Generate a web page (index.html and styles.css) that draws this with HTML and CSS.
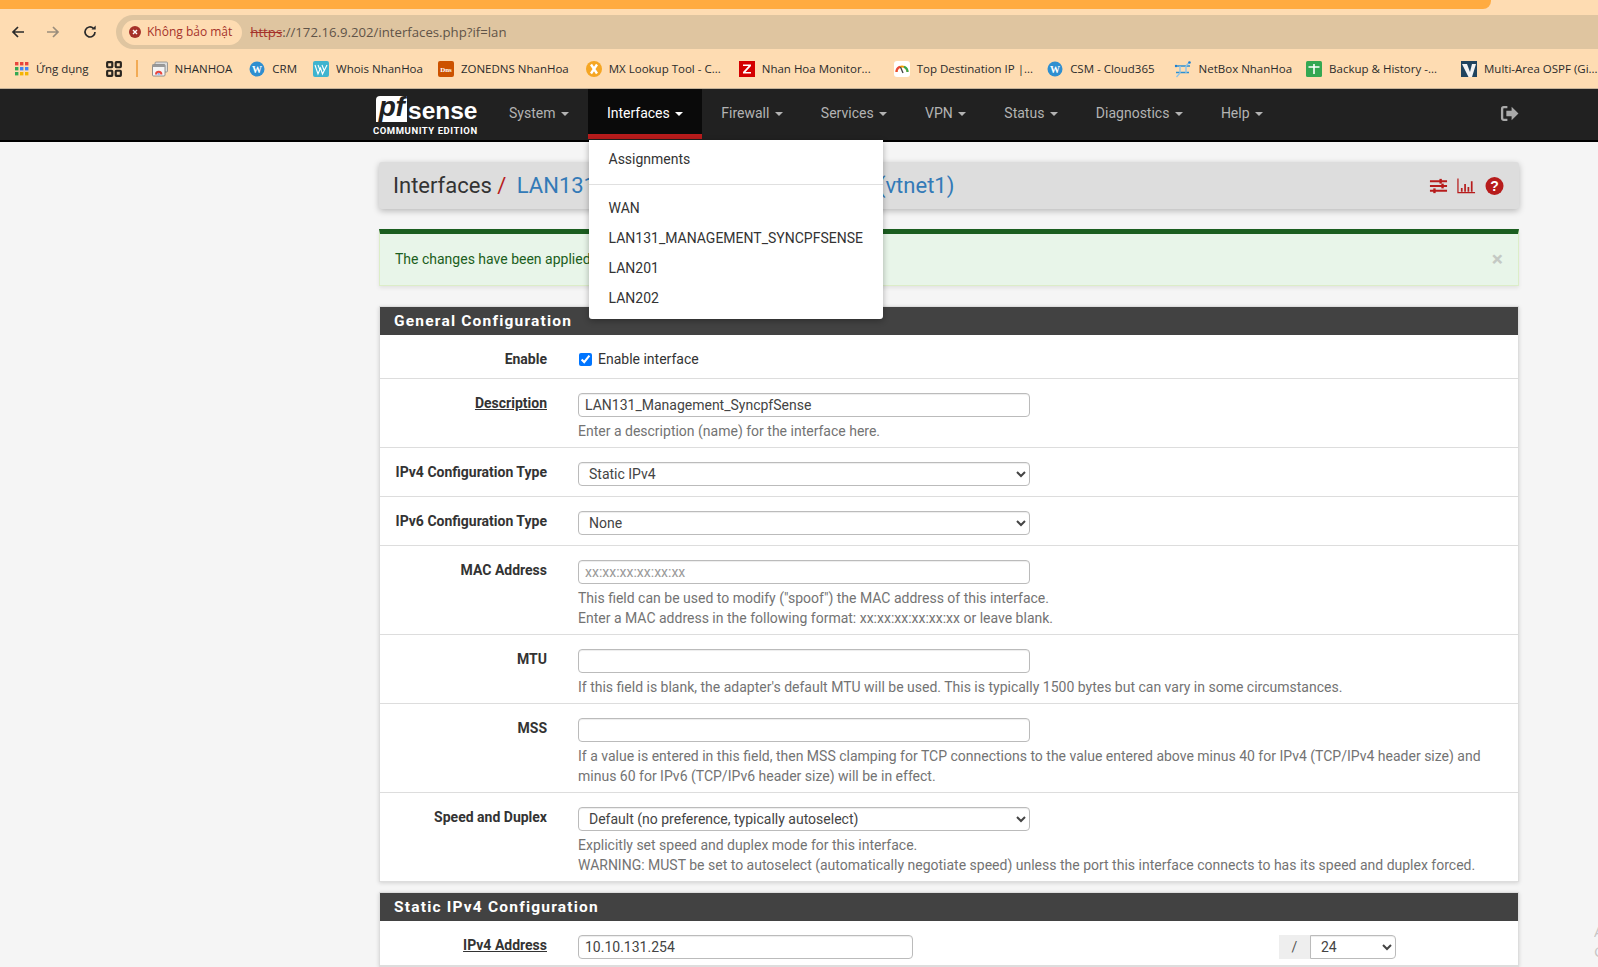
FILE: index.html

```html
<!DOCTYPE html>
<html lang="en">
<head>
  <meta charset="UTF-8">
  <title>pfSense - Interfaces: LAN131</title>
  <link rel="stylesheet" href="styles.css">
</head>
<body>

  <div class="tabstrip"><div class="tab-progress"></div></div>

  <div class="toolbar">
    <svg class="tool-icon" viewBox="0 0 16 16"><path d="M14 8H3M8 3L3 8l5 5" fill="none" stroke="#2b2b2b" stroke-width="1.7"/></svg>
    <svg class="tool-icon" viewBox="0 0 16 16"><path d="M2 8h11M8 3l5 5-5 5" fill="none" stroke="#9a8d7c" stroke-width="1.7"/></svg>
    <svg class="tool-icon tool-reload" viewBox="0 0 16 16"><path d="M13 8a5 5 0 1 1-1.6-3.7" fill="none" stroke="#2b2b2b" stroke-width="1.7"/><path d="M9.500 5.600h4.200V1.400z" fill="#2b2b2b"/></svg>
    <div class="omnibox">
      <div class="security">
        <svg class="sec-icon" viewBox="0 0 12 12"><circle cx="6" cy="6" r="6" fill="#a5322a"/><path d="M4 4l4 4M8 4l-4 4" stroke="#fff" stroke-width="1.4"/></svg>
        <span>Không bảo mật</span>
      </div>
      <div class="url"><s class="scheme">https</s>://172.16.9.202/interfaces.php?if=lan</div>
    </div>
  </div>

  <div class="bookmarks">
    <div class="bm bm-apps">
      <svg class="bm-icon" viewBox="0 0 14 14">
        <rect x="0" y="0" width="3.400" height="3.400" fill="#e8453c"/><rect x="5" y="0" width="3.400" height="3.400" fill="#e8453c"/><rect x="10" y="0" width="3.400" height="3.400" fill="#e8453c"/>
        <rect x="0" y="5" width="3.400" height="3.400" fill="#34a853"/><rect x="5" y="5" width="3.400" height="3.400" fill="#4285f4"/><rect x="10" y="5" width="3.400" height="3.400" fill="#4285f4"/>
        <rect x="0" y="10" width="3.400" height="3.400" fill="#34a853"/><rect x="5" y="10" width="3.400" height="3.400" fill="#f4b400"/><rect x="10" y="10" width="3.400" height="3.400" fill="#f4b400"/>
      </svg>
      <span>Ứng dụng</span>
    </div>
    <svg class="bm-icon bm-grid" viewBox="0 0 14 14"><g fill="none" stroke="#2b2620" stroke-width="1.900"><rect x="1" y="1" width="4.500" height="4.500" rx="0.600"/><rect x="8.500" y="1" width="4.500" height="4.500" rx="0.600"/><rect x="1" y="8.500" width="4.500" height="4.500" rx="0.600"/><rect x="8.500" y="8.500" width="4.500" height="4.500" rx="0.600"/></g></svg>
    <div class="bm-sep"></div>
    <div class="bm bm-1">
      <svg class="bm-icon" viewBox="0 0 16 16"><rect x="3" y="1" width="12.500" height="10" rx="1" fill="#ddd" stroke="#888" stroke-width="0.800"/><rect x="0.500" y="3.500" width="12.500" height="11.500" rx="1" fill="#f4f4f4" stroke="#777" stroke-width="0.800"/><rect x="0.500" y="3.500" width="12.500" height="2.500" fill="#9a9a9a"/><path d="M3 13.500a3.700 3.700 0 0 1 7.400 0h-2a1.700 1.700 0 0 0-3.400 0z" fill="#e8453c"/><path d="M5.500 13.500a1.200 1.200 0 0 1 2.400 0z" fill="#4285f4"/></svg>
      <span>NHANHOA</span>
    </div>
    <div class="bm bm-2">
      <svg class="bm-icon" viewBox="0 0 16 16"><circle cx="8" cy="8" r="7.500" fill="#2f8fd0"/><text x="8" y="11.500" class="icon-text" font-size="10" fill="#fff">W</text></svg>
      <span>CRM</span>
    </div>
    <div class="bm bm-3">
      <svg class="bm-icon" viewBox="0 0 16 16"><rect width="16" height="16" rx="2" fill="#3fb4cf"/><path d="M2 4l3 9 2.500-6 2 6L14 4M5 4l2 5M9 4l2 5" fill="none" stroke="#fff" stroke-width="1.100"/></svg>
      <span>Whois NhanHoa</span>
    </div>
    <div class="bm bm-4">
      <svg class="bm-icon" viewBox="0 0 16 16"><rect width="16" height="16" rx="2" fill="#cc5200"/><text x="8" y="11" class="icon-text" font-size="7" fill="#fff">Dns</text></svg>
      <span>ZONEDNS NhanHoa</span>
    </div>
    <div class="bm bm-5">
      <svg class="bm-icon" viewBox="0 0 16 16"><circle cx="8" cy="8" r="8" fill="#f5a623"/><path d="M5 3.500l6 9M11 3.500l-6 9" stroke="#fff" stroke-width="2.400"/></svg>
      <span>MX Lookup Tool - C...</span>
    </div>
    <div class="bm bm-6">
      <svg class="bm-icon" viewBox="0 0 16 16"><rect width="16" height="16" fill="#d40000"/><path d="M4 3.500h8v1.600L6.500 11H12v1.500H4v-1.600L9.500 5H4z" fill="#fff"/></svg>
      <span>Nhan Hoa Monitor...</span>
    </div>
    <div class="bm bm-7">
      <svg class="bm-icon" viewBox="0 0 16 16"><rect width="16" height="16" rx="3" fill="#fff"/><path d="M2.500 11a5.500 5.500 0 0 1 11 0" fill="none" stroke="#f29900" stroke-width="2"/><path d="M2.500 11A5.500 5.500 0 0 1 6 5.800" fill="none" stroke="#e8453c" stroke-width="2"/><path d="M10 5.800A5.500 5.500 0 0 1 13.500 11" fill="none" stroke="#34a853" stroke-width="2"/><path d="M6.500 6l2.500 6" stroke="#444" stroke-width="1.300"/></svg>
      <span>Top Destination IP |...</span>
    </div>
    <div class="bm bm-8">
      <svg class="bm-icon" viewBox="0 0 16 16"><circle cx="8" cy="8" r="7.500" fill="#2f8fd0"/><text x="8" y="11.500" class="icon-text" font-size="10" fill="#fff">W</text></svg>
      <span>CSM - Cloud365</span>
    </div>
    <div class="bm bm-9">
      <svg class="bm-icon bm-wide" viewBox="0 0 18 18"><path d="M1 6h15M2 12.500h13" fill="none" stroke="#2f8fd0" stroke-width="1.400"/><path d="M6 6v7M12 6v7M12 6l3.500-4M6 13l-3.500 4" fill="none" stroke="#8cc4ea" stroke-width="1.400"/><circle cx="15.500" cy="2.500" r="1.300" fill="#1f7fd0"/><circle cx="2" cy="6" r="1.200" fill="#1f7fd0"/></svg>
      <span>NetBox NhanHoa</span>
    </div>
    <div class="bm bm-10">
      <svg class="bm-icon" viewBox="0 0 16 16"><rect width="16" height="16" rx="1.500" fill="#34a853"/><path d="M2.500 6h11M8 3v10" stroke="#fff" stroke-width="1.600"/></svg>
      <span>Backup &amp; History -...</span>
    </div>
    <div class="bm bm-11">
      <svg class="bm-icon" viewBox="0 0 16 16"><rect width="16" height="16" fill="#20445f"/><path d="M1 3h5l3 8 2-8h4l-4 13H7.500z" fill="#f4f4f4"/></svg>
      <span>Multi-Area OSPF (Gi...</span>
    </div>
  </div>

  <nav class="navbar">
    <div class="brand">
      <div class="brand-top"><span class="brand-pf">pf</span><span class="brand-sense">sense</span></div>
      <div class="brand-sub">COMMUNITY EDITION</div>
    </div>
    <ul class="nav-list">
      <li>System <i class="caret"></i></li>
      <li class="active">Interfaces <i class="caret"></i></li>
      <li>Firewall <i class="caret"></i></li>
      <li>Services <i class="caret"></i></li>
      <li>VPN <i class="caret"></i></li>
      <li>Status <i class="caret"></i></li>
      <li>Diagnostics <i class="caret"></i></li>
      <li>Help <i class="caret"></i></li>
    </ul>
    <svg class="logout" viewBox="0 0 18 16"><path d="M7 2H3.500A1.500 1.500 0 0 0 2 3.500v9A1.500 1.500 0 0 0 3.500 14H7" fill="none" stroke="#a9a9a9" stroke-width="2.200"/><path d="M6 5.500h5V1.500L17.500 8 11 14.500v-4H6z" fill="#a9a9a9"/></svg>
  </nav>

  <div class="dropdown">
    <div class="dropdown-item">Assignments</div>
    <div class="dropdown-divider"></div>
    <div class="dropdown-item">WAN</div>
    <div class="dropdown-item">LAN131_MANAGEMENT_SYNCPFSENSE</div>
    <div class="dropdown-item">LAN201</div>
    <div class="dropdown-item">LAN202</div>
  </div>

  <main class="container">
    <div class="page-header">
      <h1>Interfaces <span class="slash">/</span> <a>LAN131_Management_SyncpfSense (vtnet1)</a></h1>
      <div class="header-icons">
        <svg class="hd-icon" viewBox="0 0 20 18"><g stroke="#b71c1c" fill="#b71c1c"><path d="M1 4h18M1 9h18M1 14h18" stroke-width="2.200" fill="none"/><rect x="11" y="1.500" width="2.500" height="5" stroke="none"/><rect x="13" y="6.500" width="2.500" height="5" stroke="none"/><rect x="4.500" y="11.500" width="2.500" height="5" stroke="none"/></g></svg>
        <svg class="hd-icon" viewBox="0 0 20 18"><path d="M1 1v15h18" fill="none" stroke="#b71c1c" stroke-width="1.300"/><path d="M5 15v-4M8.500 15V7M12 15v-5M15.500 15V4" fill="none" stroke="#b71c1c" stroke-width="1.800"/></svg>
        <svg class="hd-icon hd-help" viewBox="0 0 18 18"><circle cx="9" cy="9" r="9" fill="#b71c1c"/><text x="9" y="14" class="icon-text icon-bold" font-size="14" fill="#fff">?</text></svg>
      </div>
    </div>

    <div class="alert">
      <span>The changes have been applied successfully.</span>
      <span class="alert-close">×</span>
    </div>

    <section class="panel">
      <h2 class="panel-title">General Configuration</h2>

      <div class="row row-check">
        <div class="row-label">Enable</div>
        <div class="row-body">
          <label class="check"><input type="checkbox" checked> Enable interface</label>
        </div>
      </div>

      <div class="row">
        <div class="row-label"><u>Description</u></div>
        <div class="row-body">
          <input class="field" type="text" value="LAN131_Management_SyncpfSense">
          <p class="help">Enter a description (name) for the interface here.</p>
        </div>
      </div>

      <div class="row">
        <div class="row-label">IPv4 Configuration Type</div>
        <div class="row-body">
          <select class="field"><option>Static IPv4</option></select>
        </div>
      </div>

      <div class="row">
        <div class="row-label">IPv6 Configuration Type</div>
        <div class="row-body">
          <select class="field"><option>None</option></select>
        </div>
      </div>

      <div class="row">
        <div class="row-label">MAC Address</div>
        <div class="row-body">
          <input class="field" type="text" placeholder="xx:xx:xx:xx:xx:xx">
          <p class="help">This field can be used to modify ("spoof") the MAC address of this interface.<br>Enter a MAC address in the following format: xx:xx:xx:xx:xx:xx or leave blank.</p>
        </div>
      </div>

      <div class="row">
        <div class="row-label">MTU</div>
        <div class="row-body">
          <input class="field" type="text">
          <p class="help">If this field is blank, the adapter's default MTU will be used. This is typically 1500 bytes but can vary in some circumstances.</p>
        </div>
      </div>

      <div class="row">
        <div class="row-label">MSS</div>
        <div class="row-body">
          <input class="field" type="text">
          <p class="help">If a value is entered in this field, then MSS clamping for TCP connections to the value entered above minus 40 for IPv4 (TCP/IPv4 header size) and<br>minus 60 for IPv6 (TCP/IPv6 header size) will be in effect.</p>
        </div>
      </div>

      <div class="row row-last">
        <div class="row-label">Speed and Duplex</div>
        <div class="row-body">
          <select class="field"><option>Default (no preference, typically autoselect)</option></select>
          <p class="help">Explicitly set speed and duplex mode for this interface.<br>WARNING: MUST be set to autoselect (automatically negotiate speed) unless the port this interface connects to has its speed and duplex forced.</p>
        </div>
      </div>
    </section>

    <section class="panel">
      <h2 class="panel-title">Static IPv4 Configuration</h2>

      <div class="row">
        <div class="row-label"><u>IPv4 Address</u></div>
        <div class="row-body ip-group">
          <input class="field ip-field" type="text" value="10.10.131.254">
          <div class="cidr">
            <span class="cidr-slash">/</span>
            <select class="field cidr-select"><option>24</option></select>
          </div>
        </div>
      </div>
    </section>
  </main>

  <div class="watermark">Activate Windows<br>Go to Settings</div>

</body>
</html>
```

FILE: styles.css

```css
* {
  box-sizing: border-box;
}

html, body {
  height: 967px;
  overflow: hidden;
}

body {
  margin: 0;
  background: #f5f5f5;
  color: #333;
  font-family: Roboto, sans-serif;
  font-size: 14px;
  line-height: 20px;
  position: relative;
}

.icon-text {
  font-family: "Liberation Serif", serif;
  font-weight: 700;
  text-anchor: middle;
}

.icon-bold {
  font-family: "Liberation Sans", sans-serif;
}

.watermark {
  position: absolute;
  left: 1594px;
  top: 921px;
  width: 4px;
  height: 40px;
  overflow: hidden;
  color: #c6c6c6;
  font-family: "Open Sans", sans-serif;
  font-size: 15px;
  line-height: 20px;
  white-space: nowrap;
}

/* browser chrome */
.tabstrip {
  height: 15px;
  background: #fedcb2;
}

.tab-progress {
  width: 1491px;
  height: 9px;
  background: #ffab40;
  border-radius: 0 0 8px 0;
}

.toolbar {
  height: 34px;
  background: #fedcb2;
  display: flex;
  align-items: center;
  padding-left: 10px;
}

.tool-icon {
  width: 16px;
  height: 16px;
  margin-right: 19px;
  flex: none;
}

.tool-reload {
  margin-left: 2px;
  margin-right: 17px;
}

.omnibox {
  flex: 1;
  height: 34px;
  margin-left: 1px;
  background: #dfc5a0;
  border-radius: 17px 0 0 17px;
  display: flex;
  align-items: center;
  padding-left: 6px;
  font-family: "Open Sans", sans-serif;
}

.security {
  height: 25px;
  padding: 0 10px 0 7px;
  background: #fedcb2;
  border-radius: 13px;
  display: flex;
  align-items: center;
  gap: 6px;
  color: #a5322a;
  font-size: 12px;
}

.sec-icon {
  width: 12px;
  height: 12px;
}

.url {
  margin-left: 8px;
  font-size: 13.200px;
  color: #5f5448;
}

.scheme {
  color: #a5322a;
}

.bookmarks {
  height: 40px;
  background: #fedcb2;
  border-bottom: 1px solid #c4b299;
  display: flex;
  align-items: center;
  font-family: "Open Sans", sans-serif;
  font-size: 11.500px;
  color: #2b2b2b;
  white-space: nowrap;
  overflow: hidden;
}

.bm {
  display: flex;
  align-items: center;
  gap: 7px;
  flex: none;
}

.bm-icon {
  width: 16px;
  height: 16px;
  flex: none;
}

.bm-wide {
  width: 18px;
  height: 18px;
}

.bm-apps {
  margin-left: 15px;
}

.bm-apps .bm-icon {
  width: 14px;
  height: 14px;
}

.bm-grid {
  margin-left: 17px;
  flex: none;
}

.bm-sep {
  width: 2px;
  height: 17px;
  margin: 0 14px;
  background: #f2ab55;
  flex: none;
}

.bm-2, .bm-5 {
  margin-left: 17px;
}

.bm-3 {
  margin-left: 16px;
}

.bm-4 {
  margin-left: 15px;
}

.bm-6 {
  margin-left: 18px;
}

.bm-7 {
  margin-left: 23px;
}

.bm-8, .bm-10 {
  margin-left: 14px;
}

.bm-9 {
  margin-left: 19px;
}

.bm-11 {
  margin-left: 24px;
}

/* navbar */
.navbar {
  height: 53px;
  background: #212121;
  border-bottom: 2px solid #000;
  display: flex;
  padding-left: 375px;
}

.brand {
  width: 106px;
  padding-top: 7px;
  flex: none;
}

.brand-top {
  display: flex;
  align-items: flex-end;
  height: 26px;
}

.brand-pf {
  width: 31px;
  height: 26px;
  margin-left: 1px;
  background: #fff;
  border-radius: 4px 0 0 0;
  color: #212121;
  font-family: "Liberation Sans", sans-serif;
  font-size: 28px;
  font-weight: 700;
  font-style: italic;
  letter-spacing: -0.5px;
  line-height: 22px;
  text-align: center;
}

.brand-sense {
  color: #fff;
  font-family: "Liberation Sans", sans-serif;
  font-size: 24.500px;
  font-weight: 700;
  line-height: 22px;
  margin-left: 1px;
}

.brand-sub {
  margin: 4px 0 0 -2px;
  color: #fff;
  font-size: 9.500px;
  font-weight: 700;
  line-height: 9px;
  letter-spacing: 0.55px;
  white-space: nowrap;
}

.nav-list {
  list-style: none;
  display: flex;
  margin: 0;
  padding: 0 0 0 9px;
}

.nav-list li {
  height: 50px;
  padding: 0 19px;
  line-height: 48px;
  color: #b3b3b3;
  font-size: 14px;
  white-space: nowrap;
}

.nav-list li.active {
  background: #0a0a0a;
  color: #fff;
  border-bottom: 5px solid #b71c1c;
}

.caret {
  display: inline-block;
  width: 0;
  height: 0;
  margin-left: 2px;
  vertical-align: middle;
  border-top: 4px solid currentColor;
  border-left: 4px solid transparent;
  border-right: 4px solid transparent;
}

.logout {
  position: absolute;
  left: 1500px;
  top: 105px;
  width: 19px;
  height: 17px;
}

.dropdown {
  position: absolute;
  left: 589px;
  top: 140px;
  width: 294px;
  height: 179px;
  background: #fff;
  border-radius: 0 0 3px 3px;
  box-shadow: 0 2px 6px rgba(0, 0, 0, 0.3);
  padding-top: 4px;
  z-index: 10;
}

.dropdown-item {
  height: 30px;
  line-height: 30px;
  padding-left: 19.500px;
  color: #333;
  white-space: nowrap;
}

.dropdown-divider {
  height: 1px;
  margin: 10px 0 8px;
  background: #e0e0e0;
}

/* page */
.container {
  width: 1140px;
  margin-left: 379px;
  padding-top: 20px;
}

.page-header {
  height: 47px;
  background: #ddd;
  border-radius: 3px;
  box-shadow: 0 2px 6px rgba(0, 0, 0, 0.25);
  display: flex;
  align-items: center;
  justify-content: space-between;
  padding: 0 15px 0 14px;
}

.page-header h1 {
  margin: 0;
  font-size: 22px;
  font-weight: 400;
  color: #333;
  white-space: nowrap;
}

.page-header a {
  margin-left: 5px;
  color: #337ab7;
}

.slash {
  color: #b71c1c;
}

.header-icons {
  display: flex;
  align-items: center;
  gap: 9px;
}

.hd-icon {
  width: 19px;
  height: 18px;
}

.alert {
  height: 57px;
  margin-top: 20px;
  padding: 0 15px 2px;
  background: #e8f5e9;
  border: 1px solid #dcedc8;
  border-top: 5px solid #1b5e20;
  color: #1b5e20;
  display: flex;
  align-items: center;
  justify-content: space-between;
  box-shadow: 0 2px 4px rgba(0, 0, 0, 0.08);
}

.alert-close {
  font-size: 21px;
  font-weight: 700;
  color: #c4c9c4;
}

.panel {
  margin-top: 20px;
  background: #fff;
  border: 1px solid #ddd;
  box-shadow: 0 1px 4px rgba(0, 0, 0, 0.15);
}

.panel + .panel {
  margin-top: 10px;
}

.panel-title {
  margin: 0;
  height: 28px;
  padding-left: 14px;
  background: #424242;
  color: #fff;
  font-size: 15.500px;
  font-weight: 700;
  line-height: 28px;
  letter-spacing: 1.200px;
}

.row {
  display: flex;
  gap: 31px;
  padding: 14px 0 6px;
  border-bottom: 1px solid #ddd;
}

.row-last {
  border-bottom: 0;
}

.row-check {
  height: 44px;
}

.row-label {
  width: 167px;
  flex: none;
  text-align: right;
  font-weight: 700;
  white-space: nowrap;
  color: #333;
}

.row-body {
  flex: 1;
  padding-bottom: 4px;
}

.row-body:has(.help), .ip-group {
  padding-bottom: 0;
}

.check {
  display: flex;
  align-items: center;
  gap: 6px;
  margin-left: 1px;
}

.check input {
  width: 13px;
  height: 13px;
  margin: 0;
}

.field {
  display: block;
  width: 452px;
  height: 24px;
  padding: 0 6px;
  background: #fff;
  border: 1px solid #bbb;
  border-radius: 4px;
  box-shadow: inset 0 1px 1px rgba(0, 0, 0, 0.075);
  color: #444;
  font-family: Roboto, sans-serif;
  font-size: 14px;
}

.field::placeholder {
  color: #999;
}

.help {
  margin: 4px 0 0;
  color: #737373;
  white-space: nowrap;
}

.ip-group {
  display: flex;
  justify-content: space-between;
  max-width: 818px;
}

.ip-field {
  width: 335px;
}

.cidr {
  display: flex;
}

.cidr-slash {
  width: 31px;
  height: 24px;
  background: #eee;
  text-align: center;
  line-height: 24px;
  color: #555;
}

.cidr-select {
  width: 86px;
  border-radius: 0 4px 4px 0;
}
```
